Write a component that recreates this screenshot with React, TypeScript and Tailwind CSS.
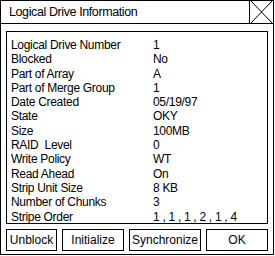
import React from "react";

const rows: [string, string][] = [
  ["Logical Drive Number", "1"],
  ["Blocked", "No"],
  ["Part of Array", "A"],
  ["Part of Merge Group", "1"],
  ["Date Created", "05/19/97"],
  ["State", "OKY"],
  ["Size", "100MB"],
  ["RAID  Level", "0"],
  ["Write Policy", "WT"],
  ["Read Ahead", "On"],
  ["Strip Unit Size", "8 KB"],
  ["Number of Chunks", "3"],
  ["Stripe Order", "1 , 1 , 1 , 2 , 1 , 4"],
];

export default function App() {
  return (
    <div
      className="w-[275px] h-[256px] bg-white text-black"
      style={{ fontFamily: '"Liberation Sans", Arial, sans-serif' }}
    >
      <div className="w-[274px] h-[255px] border border-black flex flex-col">
        <div className="flex h-[23px] border-b border-black shrink-0">
          <div className="flex-1 pl-[8px] text-[12.5px] leading-[23px] tracking-[-0.4px]">
            Logical Drive Information
          </div>
          <div className="w-[24px] border-l border-black">
            <svg width="23" height="22" viewBox="0 0 23 22">
              <line x1="1" y1="0" x2="22" y2="22" stroke="black" strokeWidth="1" />
              <line x1="22" y1="0" x2="1" y2="22" stroke="black" strokeWidth="1" />
            </svg>
          </div>
        </div>
        <div className="flex-1 flex flex-col px-[5px] pt-[7px]">
          <div className="h-[193px] border border-black pt-[6px] pl-[4px] text-[12px] tracking-[-0.3px]">
            {rows.map(([k, v]) => (
              <div key={k} className="flex h-[14.3px] leading-[14px] whitespace-pre">
                <div className="w-[142px]">{k}</div>
                <div>{v}</div>
              </div>
            ))}
          </div>
          <div className="flex mt-[5px] gap-[5px] text-[12px]">
            <button className="w-[51px] h-[22px] border border-black">Unblock</button>
            <button className="w-[62px] h-[22px] border border-black">Initialize</button>
            <button className="w-[72px] h-[22px] border border-black">Synchronize</button>
            <button className="flex-1 h-[22px] border border-black">OK</button>
          </div>
        </div>
      </div>
    </div>
  );
}
